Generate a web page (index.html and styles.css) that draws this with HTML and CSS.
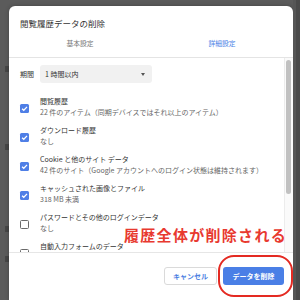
FILE: index.html
```html
<!DOCTYPE html>
<html>
<head>
  <title>閲覧履歴データの削除</title>
  <link rel="stylesheet" href="styles.css">
</head>
<body>
  <div class="backdrop">
    <div class="page-edge">
      <span class="ghost ghost-1"></span>
      <span class="ghost ghost-2"></span>
      <span class="ghost ghost-3"></span>
      <span class="ghost ghost-4"></span>
    </div>

    <div class="dialog">
      <h1 class="dialog-title">閲覧履歴データの削除</h1>

      <div class="tabs">
        <div class="tab">基本設定</div>
        <div class="tab tab-active">詳細設定</div>
      </div>

      <div class="dialog-body">
        <div class="scroll-content">
          <div class="period-row">
            <span class="period-label">期間</span>
            <div class="select">
              <span>1 時間以内</span>
              <span class="select-arrow"></span>
            </div>
          </div>

          <div class="option">
            <span class="checkbox checked">
              <svg viewBox="0 0 10 10"><path d="M2.3 5.2 L4.2 7 L7.8 3.2" /></svg>
            </span>
            <div class="option-text">
              <div class="option-label">閲覧履歴</div>
              <div class="option-sub">22 件のアイテム（同期デバイスではそれ以上のアイテム）</div>
            </div>
          </div>

          <div class="option">
            <span class="checkbox checked">
              <svg viewBox="0 0 10 10"><path d="M2.3 5.2 L4.2 7 L7.8 3.2" /></svg>
            </span>
            <div class="option-text">
              <div class="option-label">ダウンロード履歴</div>
              <div class="option-sub">なし</div>
            </div>
          </div>

          <div class="option">
            <span class="checkbox checked">
              <svg viewBox="0 0 10 10"><path d="M2.3 5.2 L4.2 7 L7.8 3.2" /></svg>
            </span>
            <div class="option-text">
              <div class="option-label">Cookie と他のサイト データ</div>
              <div class="option-sub">42 件のサイト（Google アカウントへのログイン状態は維持されます）</div>
            </div>
          </div>

          <div class="option">
            <span class="checkbox checked">
              <svg viewBox="0 0 10 10"><path d="M2.3 5.2 L4.2 7 L7.8 3.2" /></svg>
            </span>
            <div class="option-text">
              <div class="option-label">キャッシュされた画像とファイル</div>
              <div class="option-sub">318 MB 未満</div>
            </div>
          </div>

          <div class="option">
            <span class="checkbox"></span>
            <div class="option-text">
              <div class="option-label">パスワードとその他のログインデータ</div>
              <div class="option-sub">なし</div>
            </div>
          </div>

          <div class="option">
            <span class="checkbox"></span>
            <div class="option-text">
              <div class="option-label">自動入力フォームのデータ</div>
              <div class="option-sub">&nbsp;</div>
            </div>
          </div>
        </div>

        <div class="scrollbar">
          <div class="scrollbar-thumb"></div>
        </div>
      </div>

      <div class="dialog-footer">
        <button class="btn btn-cancel">キャンセル</button>
        <button class="btn btn-primary">データを削除</button>
      </div>
    </div>

    <div class="window-edge"></div>
  </div>

  <!-- annotation drawn over the screenshot -->
  <div class="note">履歴全体が削除される</div>
  <div class="highlight-ring"></div>
</body>
</html>
```

FILE: styles.css
```css
body {
  margin: 0;
  background-color: #5b5b5b;
  font-family: "Noto Sans CJK JP", "Noto Sans", sans-serif;
  color: #333;
  width: 300px;
  height: 300px;
  overflow: hidden;
  position: relative;
}

.backdrop {
  display: flex;
  height: 300px;
}

/* dimmed page peeking out left of the dialog */
.page-edge {
  width: 9px;
  display: flex;
  flex-direction: column;
  align-items: flex-end;
}

.ghost {
  width: 4px;
  height: 6px;
  background-color: #464646;
}

.ghost-1 { margin-top: 66px; }
.ghost-2 { margin-top: 72px; }
.ghost-3 { margin-top: 76px; }
.ghost-4 { margin-top: 24px; }

.dialog {
  width: 284px;
  margin-top: 6px;
  background-color: #fff;
  border-radius: 6px 6px 0 0;
  box-shadow: 0 0 4px rgba(0, 0, 0, 0.25);
  display: flex;
  flex-direction: column;
  overflow: hidden;
}

.window-edge {
  flex: 1;
  background-color: #4a4a4a;
  border-left: 3px solid #565656;
}

.dialog-title {
  margin: 0;
  padding: 11px 0 0 11px;
  font-size: 8.5px;
  line-height: 12px;
  font-weight: normal;
  color: #333;
}

.tabs {
  display: flex;
  height: 28px;
  border-bottom: 1px solid #e4e4e4;
}

.tab {
  flex: 1;
  display: flex;
  align-items: center;
  justify-content: center;
  font-size: 6.8px;
  color: #777;
}

.tab-active {
  color: #4d82e6;
}

.dialog-body {
  display: flex;
  height: 194px;
  overflow: hidden;
}

.scroll-content {
  flex: 1;
  padding: 7px 0 0 11px;
  overflow: hidden;
}

.scrollbar {
  width: 8px;
  border-left: 1px solid #ececec;
  background-color: #fafafa;
}

.scrollbar-thumb {
  width: 5px;
  height: 134px;
  margin: 2px 0 0 1px;
  border-radius: 3px;
  background-color: #c1c1c1;
}

.period-row {
  display: flex;
  align-items: center;
  gap: 6px;
  margin-bottom: 13px;
}

.period-label {
  font-size: 7px;
}

.select {
  width: 112px;
  height: 18px;
  box-sizing: border-box;
  padding: 0 5px;
  background-color: #f1f1f1;
  border-radius: 3px;
  display: flex;
  align-items: center;
  justify-content: space-between;
  font-size: 7px;
  color: #333;
}

.select-arrow {
  width: 0;
  height: 0;
  border-left: 2.5px solid transparent;
  border-right: 2.5px solid transparent;
  border-top: 3px solid #555;
  margin-right: 2px;
}

.option {
  display: flex;
  align-items: center;
  gap: 11px;
  margin-bottom: 7px;
}

.checkbox {
  width: 9px;
  height: 9px;
  box-sizing: border-box;
  border: 1.4px solid #6a6a6a;
  border-radius: 1.5px;
  flex-shrink: 0;
  margin-top: 3px;
}

.checkbox.checked {
  border: none;
  background-color: #4f7fe6;
}

.checkbox svg {
  display: block;
  width: 9px;
  height: 9px;
  fill: none;
  stroke: #fff;
  stroke-width: 1.4;
}

.option-text {
  white-space: nowrap;
}

.option-label {
  font-size: 7px;
  line-height: 11px;
  color: #333;
}

.option-sub {
  font-size: 7px;
  line-height: 11px;
  color: #666;
}

.dialog-footer {
  flex: 1;
  border-top: 1px solid #e6e6e6;
  display: flex;
  justify-content: flex-end;
  align-items: flex-start;
  gap: 6px;
  padding: 14px 9px 0 0;
}

.btn {
  height: 18px;
  border-radius: 3px;
  font-family: "Noto Sans CJK JP", sans-serif;
  font-size: 7px;
  font-weight: bold;
  padding: 0;
}

.btn-cancel {
  width: 53px;
  background-color: #fff;
  border: 1px solid #dadada;
  color: #4d7fe2;
}

.btn-primary {
  width: 61px;
  background-color: #4a7fe6;
  border: none;
  color: #fff;
}

.note {
  position: absolute;
  left: 124px;
  top: 226px;
  font-size: 15px;
  line-height: 18px;
  font-weight: bold;
  letter-spacing: 1.3px;
  color: #e8392f;
}

.highlight-ring {
  position: absolute;
  left: 218px;
  top: 255px;
  width: 75px;
  height: 42px;
  box-sizing: border-box;
  border: 2.5px solid #e42a22;
  border-radius: 16px;
}
```
